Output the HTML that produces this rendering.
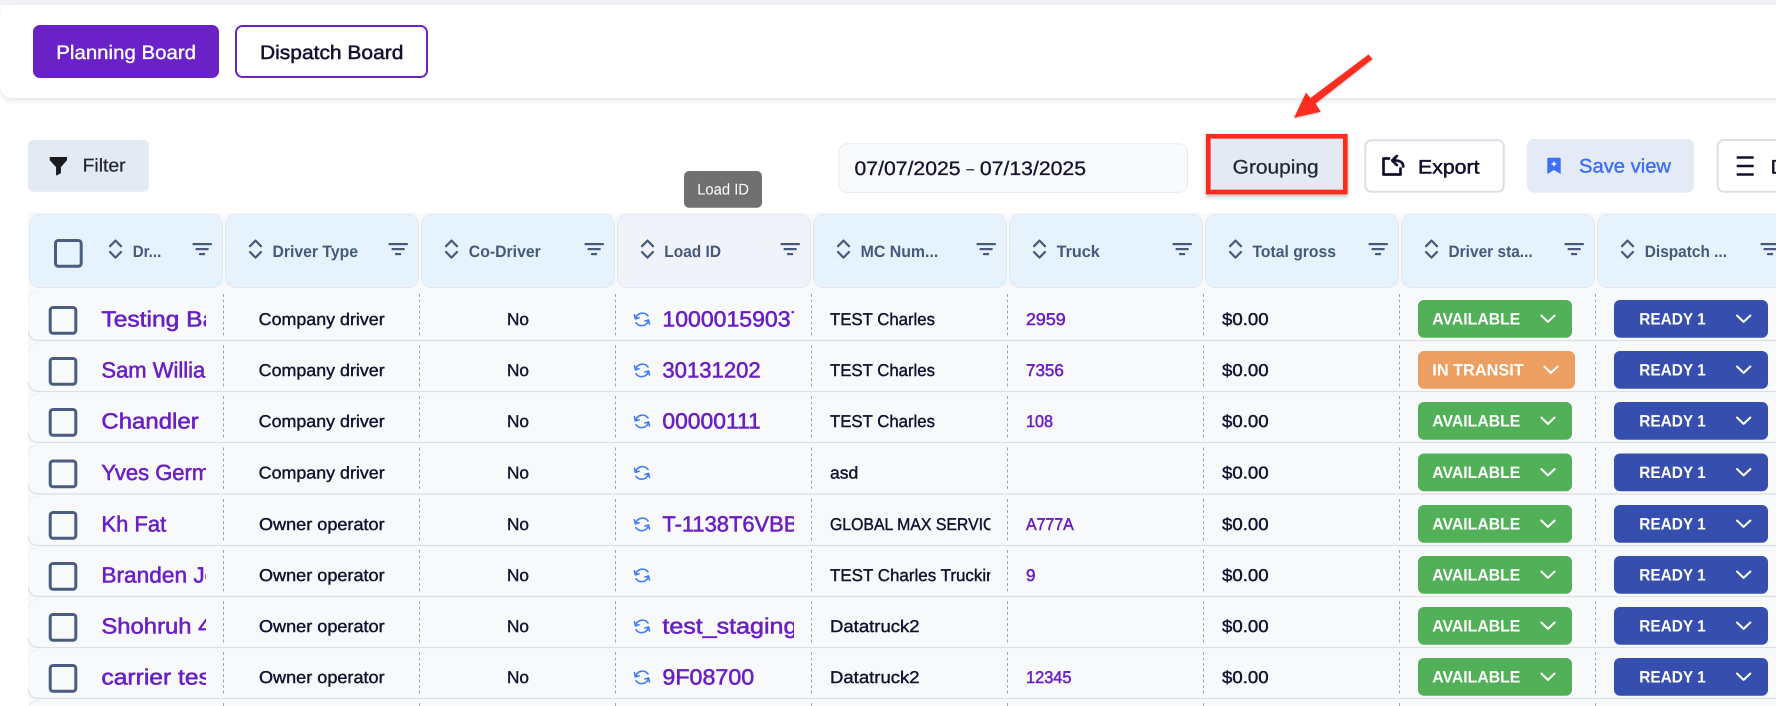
<!DOCTYPE html>
<html lang="en">
<head>
<meta charset="utf-8">
<title>Planning Board</title>
<style>
html,body{margin:0;padding:0;background:#fff;width:1776px;height:706px;overflow:hidden}
svg{display:block;text-rendering:geometricPrecision}
text{font-family:"Liberation Sans",Arial,sans-serif;white-space:pre}
.m{stroke-width:.5px}
.btn{font-size:19.5px;fill:#12102e;stroke:#12102e}
.h{font-size:16.5px;font-weight:700;fill:#46597a}
.c{font-size:17px;fill:#12102e;stroke:#12102e;stroke-width:.4px}
.t{font-size:17px;fill:#6a1fc4;stroke:#6a1fc4;stroke-width:.5px}
.n{font-size:22px;fill:#6a1fc4;stroke:#6a1fc4;stroke-width:.55px}
.p{font-size:16.5px;font-weight:700;fill:#fff}
</style>
</head>
<body>
<svg width="1776" height="706" viewBox="0 0 1776 706" xmlns="http://www.w3.org/2000/svg">
<defs>
<clipPath id="cn"><rect x="100" y="290" width="106" height="50"/></clipPath>
<clipPath id="cl"><rect x="660" y="290" width="134" height="50"/></clipPath>
<clipPath id="cm"><rect x="828" y="290" width="162.4" height="50"/></clipPath>
<g id="sort" fill="none" stroke="#46597a" stroke-width="2.2" stroke-linecap="round" stroke-linejoin="round">
<path d="M0 6.2L5.5 .6L11 6.2"/><path d="M0 12L5.5 17.6L11 12"/>
</g>
<g id="flt" fill="#46597a">
<rect x="0" y="0" width="19.2" height="2.2"/><rect x="3" y="5" width="13" height="2.2"/><rect x="6.5" y="10" width="6" height="2.2"/>
</g>
<g id="chev" fill="none" stroke="#fff" stroke-width="2" stroke-linecap="round" stroke-linejoin="round"><path d="M1 1L7.6 7.4L14.4 1"/></g>
<g id="base">
<path d="M28.5 331 Q28.5 340.5 39 340.5 H1776" fill="none" stroke="#dcdfe3" stroke-width="1.2"/>
<path d="M28.5 302 Q28.5 292 39 291.5" fill="none" stroke="#eceef1" stroke-width="1"/>
<rect x="50.2" y="307.5" width="25.6" height="25.7" rx="2.8" fill="none" stroke="#4a5d7e" stroke-width="3"/>
<g stroke="#a3a6ad" stroke-width="1" stroke-dasharray="3 2.5">
<path d="M223.5 294V338M419.5 294V338M615.5 294V338M811.5 294V338M1007.5 294V338M1203.5 294V338M1399.5 294V338M1595.5 294V338"/>
</g>
<g transform="translate(634,312.4)" fill="none" stroke="#3f7bf6" stroke-width="1.6" stroke-linecap="round" stroke-linejoin="round">
<path d="M14 3.6A7 7 0 0 0 1.6 6"/><path d="M.5 2.4L1.4 6.4L5 5.4"/>
<path d="M2 10.4A7 7 0 0 0 14.4 8"/><path d="M15.5 11.6L14.6 7.6L11 8.6"/>
</g>
</g>
</defs>

<!-- top strip and card -->
<rect x="0" y="0" width="1776" height="5" fill="#f1f3f6"/>
<rect x="0" y="5" width="1790" height="93" rx="12" fill="#fff" style="filter:drop-shadow(0 2px 3px rgba(40,50,70,.14))"/>
<rect x="33" y="25" width="186" height="53" rx="7" fill="#6b21c8"/>
<text x="56.3" y="59" font-size="19.5" fill="#fff" stroke="#fff" stroke-width=".35" textLength="139.7" lengthAdjust="spacingAndGlyphs">Planning Board</text>
<rect x="236" y="26" width="191" height="51" rx="6.5" fill="#fff" stroke="#6a22c4" stroke-width="2"/>
<text x="260" y="59" class="btn m" textLength="143.4" lengthAdjust="spacingAndGlyphs">Dispatch Board</text>

<!-- toolbar -->
<rect x="28" y="140" width="120.8" height="51.8" rx="5" fill="#e4eaf4"/>
<path d="M50 157.3H66.7V160L60.6 167V173L56.4 175.2V167L50 160Z" fill="#1a1a1f" stroke="#1a1a1f" stroke-width=".6" stroke-linejoin="round"/>
<text x="82.6" y="171.7" font-size="18.5" fill="#24262f" stroke="#24262f" stroke-width=".25" textLength="43" lengthAdjust="spacingAndGlyphs">Filter</text>

<rect x="838.9" y="143.8" width="348.6" height="48.6" rx="8" fill="#f9fafb" stroke="#e8eaee"/>
<text x="854.5" y="175" font-size="19.5" fill="#12102e" stroke="#12102e" stroke-width=".3" textLength="231.5" lengthAdjust="spacingAndGlyphs">07/07/2025 <tspan font-size="12.5" dy="-2">–</tspan><tspan dy="2"> 07/13/2025</tspan></text>

<rect x="684" y="171" width="78" height="36.7" rx="5" fill="#707070"/>
<text x="697.2" y="194.3" font-size="15.5" fill="#fff" textLength="51.8" lengthAdjust="spacingAndGlyphs">Load ID</text>

<rect x="1208.3" y="136.3" width="137" height="55.7" fill="#e4eaf4" stroke="#fb2d1f" stroke-width="4.7" style="filter:drop-shadow(0 2px 2px rgba(0,0,0,.28))"/>
<text x="1232.7" y="173.3" font-size="19.5" fill="#24262f" stroke="#24262f" stroke-width=".25" textLength="86" lengthAdjust="spacingAndGlyphs">Grouping</text>

<polygon points="1368.5,54.5 1372.5,59 1315.5,103.5 1320.7,111.7 1294,117.7 1306,92.7 1310.5,98" fill="#fb2d1f" style="filter:drop-shadow(0 1px 1px rgba(0,0,0,.25))"/>

<rect x="1365.3" y="140.3" width="138.4" height="51.4" rx="6" fill="#fff" stroke="#dedfe6" stroke-width="2"/>
<g fill="none" stroke="#12102e" stroke-width="2.7" stroke-linejoin="round" stroke-linecap="round">
<path d="M1389 158.5H1383.5V174.5H1400.5V168.5"/>
<path d="M1403.2 166.5C1403.2 161.5 1399 160.3 1392.5 160.3"/>
<path d="M1396.8 156L1392.3 160.5L1396.8 165"/>
</g>
<text x="1418" y="173.3" class="btn m" textLength="61.5" lengthAdjust="spacingAndGlyphs">Export</text>

<rect x="1527" y="139" width="167" height="53.7" rx="7" fill="#e5ebf6"/>
<path d="M1548.5 157.7H1559.5Q1560.7 157.7 1560.7 158.9V174L1554 170L1547.3 174V158.9Q1547.3 157.7 1548.5 157.7Z" fill="#3b6ff6"/>
<path d="M1554 161.5V166.3M1551.6 163.9H1556.4" stroke="#fff" stroke-width="1.4"/>
<text x="1579" y="172.7" font-size="19.5" fill="#3b6ff6" stroke="#3b6ff6" stroke-width=".4" textLength="92" lengthAdjust="spacingAndGlyphs">Save view</text>

<rect x="1717.7" y="140" width="80" height="51.7" rx="6" fill="#fff" stroke="#dedfe6" stroke-width="2"/>
<path d="M1736.7 157.5H1753.7M1736.7 166H1753.7M1736.7 174.5H1753.7" stroke="#12102e" stroke-width="2.4"/>
<text x="1770.7" y="173.3" class="btn m">D</text>

<!-- table backdrop -->
<rect x="28" y="213" width="1748" height="493" fill="#f7f9fb"/>

<!-- header cells -->
<g stroke="#e3e8ee" stroke-width="1">
<rect x="29.5" y="214.5" width="193" height="73" rx="10" fill="#e6f3fd"/>
<rect x="225.5" y="214.5" width="193" height="73" rx="10" fill="#e6f3fd"/>
<rect x="421.5" y="214.5" width="193" height="73" rx="10" fill="#e6f3fd"/>
<rect x="617.5" y="214.5" width="193" height="73" rx="10" fill="#f0f3f9"/>
<rect x="813.5" y="214.5" width="193" height="73" rx="10" fill="#e6f3fd"/>
<rect x="1009.5" y="214.5" width="193" height="73" rx="10" fill="#e6f3fd"/>
<rect x="1205.5" y="214.5" width="193" height="73" rx="10" fill="#e6f3fd"/>
<rect x="1401.5" y="214.5" width="193" height="73" rx="10" fill="#e6f3fd"/>
<rect x="1597.5" y="214.5" width="193" height="73" rx="10" fill="#e6f3fd"/>
</g>
<rect x="55.5" y="240.5" width="25.7" height="25.7" rx="2.8" fill="none" stroke="#4a5d7e" stroke-width="3"/>

<use href="#sort" x="110" y="240"/>
<use href="#sort" x="250" y="240"/>
<use href="#sort" x="446" y="240"/>
<use href="#sort" x="642" y="240"/>
<use href="#sort" x="838" y="240"/>
<use href="#sort" x="1034" y="240"/>
<use href="#sort" x="1230" y="240"/>
<use href="#sort" x="1426" y="240"/>
<use href="#sort" x="1622" y="240"/>

<use href="#flt" x="192.6" y="243"/>
<use href="#flt" x="388.6" y="243"/>
<use href="#flt" x="584.6" y="243"/>
<use href="#flt" x="780.6" y="243"/>
<use href="#flt" x="976.6" y="243"/>
<use href="#flt" x="1172.6" y="243"/>
<use href="#flt" x="1368.6" y="243"/>
<use href="#flt" x="1564.6" y="243"/>
<use href="#flt" x="1760.6" y="243"/>

<text x="132.7" y="257" class="h" textLength="28.6" lengthAdjust="spacingAndGlyphs">Dr...</text>
<text x="272.5" y="257" class="h" textLength="85.5" lengthAdjust="spacingAndGlyphs">Driver Type</text>
<text x="468.8" y="257" class="h" textLength="72" lengthAdjust="spacingAndGlyphs">Co-Driver</text>
<text x="664.3" y="257" class="h" textLength="56.7" lengthAdjust="spacingAndGlyphs">Load ID</text>
<text x="860.6" y="257" class="h" textLength="77.7" lengthAdjust="spacingAndGlyphs">MC Num...</text>
<text x="1056.6" y="257" class="h" textLength="43.2" lengthAdjust="spacingAndGlyphs">Truck</text>
<text x="1252.5" y="257" class="h" textLength="83.5" lengthAdjust="spacingAndGlyphs">Total gross</text>
<text x="1448.5" y="257" class="h" textLength="84.2" lengthAdjust="spacingAndGlyphs">Driver sta...</text>
<text x="1644.8" y="257" class="h" textLength="82.2" lengthAdjust="spacingAndGlyphs">Dispatch ...</text>

<!-- row 1 -->
<g transform="translate(0,0)">
<use href="#base"/>
<text x="101.4" y="326.7" class="n" clip-path="url(#cn)" textLength="147.7" lengthAdjust="spacingAndGlyphs">Testing Bates</text>
<text x="258.7" y="325" class="c" textLength="126" lengthAdjust="spacingAndGlyphs">Company driver</text>
<text x="507" y="325" class="c" textLength="22" lengthAdjust="spacingAndGlyphs">No</text>
<text x="662.4" y="326.7" class="n" clip-path="url(#cl)" textLength="141" lengthAdjust="spacingAndGlyphs">10000159037</text>
<text x="830" y="325" class="c" textLength="105" lengthAdjust="spacingAndGlyphs">TEST Charles</text>
<text x="1026" y="325" class="t" textLength="39.7" lengthAdjust="spacingAndGlyphs">2959</text>
<text x="1222" y="325" class="c" textLength="46.6" lengthAdjust="spacingAndGlyphs">$0.00</text>
<rect x="1418" y="300" width="154" height="37.7" rx="6" fill="#52b059"/>
<text x="1432.3" y="324.7" class="p" textLength="88" lengthAdjust="spacingAndGlyphs">AVAILABLE</text>
<use href="#chev" x="1540.3" y="314.5"/>
<rect x="1614" y="300" width="154" height="37.7" rx="6" fill="#364fae"/>
<text x="1639.3" y="324.7" class="p" textLength="66.4" lengthAdjust="spacingAndGlyphs">READY 1</text>
<use href="#chev" x="1736" y="314.5"/>
</g>

<!-- row 2 -->
<g transform="translate(0,51)">
<use href="#base"/>
<text x="101.4" y="326.7" class="n" clip-path="url(#cn)">Sam Williams</text>
<text x="258.7" y="325" class="c" textLength="126" lengthAdjust="spacingAndGlyphs">Company driver</text>
<text x="507" y="325" class="c" textLength="22" lengthAdjust="spacingAndGlyphs">No</text>
<text x="662.4" y="326.7" class="n" clip-path="url(#cl)" textLength="98.3" lengthAdjust="spacingAndGlyphs">30131202</text>
<text x="830" y="325" class="c" textLength="105" lengthAdjust="spacingAndGlyphs">TEST Charles</text>
<text x="1026" y="325" class="t" textLength="37.8" lengthAdjust="spacingAndGlyphs">7356</text>
<text x="1222" y="325" class="c" textLength="46.6" lengthAdjust="spacingAndGlyphs">$0.00</text>
<rect x="1418" y="300" width="157" height="37.7" rx="6" fill="#ec9f60"/>
<text x="1432.3" y="324.7" class="p" textLength="91.4" lengthAdjust="spacingAndGlyphs">IN TRANSIT</text>
<use href="#chev" x="1543.3" y="314.5"/>
<rect x="1614" y="300" width="154" height="37.7" rx="6" fill="#364fae"/>
<text x="1639.3" y="324.7" class="p" textLength="66.4" lengthAdjust="spacingAndGlyphs">READY 1</text>
<use href="#chev" x="1736" y="314.5"/>
</g>

<!-- row 3 -->
<g transform="translate(0,102)">
<use href="#base"/>
<text x="101.4" y="326.7" class="n" clip-path="url(#cn)" textLength="152" lengthAdjust="spacingAndGlyphs">Chandler Bing</text>
<text x="258.7" y="325" class="c" textLength="126" lengthAdjust="spacingAndGlyphs">Company driver</text>
<text x="507" y="325" class="c" textLength="22" lengthAdjust="spacingAndGlyphs">No</text>
<text x="662.4" y="326.7" class="n" clip-path="url(#cl)" textLength="98.3" lengthAdjust="spacingAndGlyphs">00000111</text>
<text x="830" y="325" class="c" textLength="105" lengthAdjust="spacingAndGlyphs">TEST Charles</text>
<text x="1026" y="325" class="t" textLength="27" lengthAdjust="spacingAndGlyphs">108</text>
<text x="1222" y="325" class="c" textLength="46.6" lengthAdjust="spacingAndGlyphs">$0.00</text>
<rect x="1418" y="300" width="154" height="37.7" rx="6" fill="#52b059"/>
<text x="1432.3" y="324.7" class="p" textLength="88" lengthAdjust="spacingAndGlyphs">AVAILABLE</text>
<use href="#chev" x="1540.3" y="314.5"/>
<rect x="1614" y="300" width="154" height="37.7" rx="6" fill="#364fae"/>
<text x="1639.3" y="324.7" class="p" textLength="66.4" lengthAdjust="spacingAndGlyphs">READY 1</text>
<use href="#chev" x="1736" y="314.5"/>
</g>

<!-- row 4 -->
<g transform="translate(0,153.5)">
<use href="#base"/>
<text x="101.4" y="326.7" class="n" clip-path="url(#cn)">Yves Germain</text>
<text x="258.7" y="325" class="c" textLength="126" lengthAdjust="spacingAndGlyphs">Company driver</text>
<text x="507" y="325" class="c" textLength="22" lengthAdjust="spacingAndGlyphs">No</text>
<text x="830" y="325" class="c" textLength="28.3" lengthAdjust="spacingAndGlyphs">asd</text>
<text x="1222" y="325" class="c" textLength="46.6" lengthAdjust="spacingAndGlyphs">$0.00</text>
<rect x="1418" y="300" width="154" height="37.7" rx="6" fill="#52b059"/>
<text x="1432.3" y="324.7" class="p" textLength="88" lengthAdjust="spacingAndGlyphs">AVAILABLE</text>
<use href="#chev" x="1540.3" y="314.5"/>
<rect x="1614" y="300" width="154" height="37.7" rx="6" fill="#364fae"/>
<text x="1639.3" y="324.7" class="p" textLength="66.4" lengthAdjust="spacingAndGlyphs">READY 1</text>
<use href="#chev" x="1736" y="314.5"/>
</g>

<!-- row 5 -->
<g transform="translate(0,205)">
<use href="#base"/>
<text x="101.4" y="326.7" class="n" clip-path="url(#cn)">Kh Fat</text>
<text x="259" y="325" class="c" textLength="125.6" lengthAdjust="spacingAndGlyphs">Owner operator</text>
<text x="507" y="325" class="c" textLength="22" lengthAdjust="spacingAndGlyphs">No</text>
<text x="662.4" y="326.7" class="n" clip-path="url(#cl)" textLength="136" lengthAdjust="spacingAndGlyphs">T-1138T6VBB</text>
<text x="830" y="325" class="c" clip-path="url(#cm)" textLength="175" lengthAdjust="spacingAndGlyphs">GLOBAL MAX SERVICE</text>
<text x="1026" y="325" class="t" textLength="47.8" lengthAdjust="spacingAndGlyphs">A777A</text>
<text x="1222" y="325" class="c" textLength="46.6" lengthAdjust="spacingAndGlyphs">$0.00</text>
<rect x="1418" y="300" width="154" height="37.7" rx="6" fill="#52b059"/>
<text x="1432.3" y="324.7" class="p" textLength="88" lengthAdjust="spacingAndGlyphs">AVAILABLE</text>
<use href="#chev" x="1540.3" y="314.5"/>
<rect x="1614" y="300" width="154" height="37.7" rx="6" fill="#364fae"/>
<text x="1639.3" y="324.7" class="p" textLength="66.4" lengthAdjust="spacingAndGlyphs">READY 1</text>
<use href="#chev" x="1736" y="314.5"/>
</g>

<!-- row 6 -->
<g transform="translate(0,256)">
<use href="#base"/>
<text x="101.4" y="326.7" class="n" clip-path="url(#cn)" textLength="152.4" lengthAdjust="spacingAndGlyphs">Branden Jones</text>
<text x="259" y="325" class="c" textLength="125.6" lengthAdjust="spacingAndGlyphs">Owner operator</text>
<text x="507" y="325" class="c" textLength="22" lengthAdjust="spacingAndGlyphs">No</text>
<text x="830" y="325" class="c" clip-path="url(#cm)" textLength="175" lengthAdjust="spacingAndGlyphs">TEST Charles Trucking</text>
<text x="1026" y="325" class="t" textLength="9.5" lengthAdjust="spacingAndGlyphs">9</text>
<text x="1222" y="325" class="c" textLength="46.6" lengthAdjust="spacingAndGlyphs">$0.00</text>
<rect x="1418" y="300" width="154" height="37.7" rx="6" fill="#52b059"/>
<text x="1432.3" y="324.7" class="p" textLength="88" lengthAdjust="spacingAndGlyphs">AVAILABLE</text>
<use href="#chev" x="1540.3" y="314.5"/>
<rect x="1614" y="300" width="154" height="37.7" rx="6" fill="#364fae"/>
<text x="1639.3" y="324.7" class="p" textLength="66.4" lengthAdjust="spacingAndGlyphs">READY 1</text>
<use href="#chev" x="1736" y="314.5"/>
</g>

<!-- row 7 -->
<g transform="translate(0,307)">
<use href="#base"/>
<text x="101.4" y="326.7" class="n" clip-path="url(#cn)" textLength="149.8" lengthAdjust="spacingAndGlyphs">Shohruh 4444</text>
<text x="259" y="325" class="c" textLength="125.6" lengthAdjust="spacingAndGlyphs">Owner operator</text>
<text x="507" y="325" class="c" textLength="22" lengthAdjust="spacingAndGlyphs">No</text>
<text x="662.4" y="326.7" class="n" clip-path="url(#cl)" textLength="135" lengthAdjust="spacingAndGlyphs">test_staging</text>
<text x="830" y="325" class="c" textLength="89.6" lengthAdjust="spacingAndGlyphs">Datatruck2</text>
<text x="1222" y="325" class="c" textLength="46.6" lengthAdjust="spacingAndGlyphs">$0.00</text>
<rect x="1418" y="300" width="154" height="37.7" rx="6" fill="#52b059"/>
<text x="1432.3" y="324.7" class="p" textLength="88" lengthAdjust="spacingAndGlyphs">AVAILABLE</text>
<use href="#chev" x="1540.3" y="314.5"/>
<rect x="1614" y="300" width="154" height="37.7" rx="6" fill="#364fae"/>
<text x="1639.3" y="324.7" class="p" textLength="66.4" lengthAdjust="spacingAndGlyphs">READY 1</text>
<use href="#chev" x="1736" y="314.5"/>
</g>

<!-- row 8 -->
<g transform="translate(0,358)">
<use href="#base"/>
<text x="101.4" y="326.7" class="n" clip-path="url(#cn)" textLength="116.4" lengthAdjust="spacingAndGlyphs">carrier test</text>
<text x="259" y="325" class="c" textLength="125.6" lengthAdjust="spacingAndGlyphs">Owner operator</text>
<text x="507" y="325" class="c" textLength="22" lengthAdjust="spacingAndGlyphs">No</text>
<text x="662.4" y="326.7" class="n" clip-path="url(#cl)" textLength="91.8" lengthAdjust="spacingAndGlyphs">9F08700</text>
<text x="830" y="325" class="c" textLength="89.6" lengthAdjust="spacingAndGlyphs">Datatruck2</text>
<text x="1026" y="325" class="t" textLength="45.5" lengthAdjust="spacingAndGlyphs">12345</text>
<text x="1222" y="325" class="c" textLength="46.6" lengthAdjust="spacingAndGlyphs">$0.00</text>
<rect x="1418" y="300" width="154" height="37.7" rx="6" fill="#52b059"/>
<text x="1432.3" y="324.7" class="p" textLength="88" lengthAdjust="spacingAndGlyphs">AVAILABLE</text>
<use href="#chev" x="1540.3" y="314.5"/>
<rect x="1614" y="300" width="154" height="37.7" rx="6" fill="#364fae"/>
<text x="1639.3" y="324.7" class="p" textLength="66.4" lengthAdjust="spacingAndGlyphs">READY 1</text>
<use href="#chev" x="1736" y="314.5"/>
</g>

<!-- start of next row -->
<path d="M28.5 712 Q28.5 701 39 700.5" fill="none" stroke="#eceef1"/>
<path d="M223.5 703V706M419.5 703V706M615.5 703V706M811.5 703V706M1007.5 703V706M1203.5 703V706M1399.5 703V706M1595.5 703V706" stroke="#a3a6ad"/>
</svg>
</body>
</html>
